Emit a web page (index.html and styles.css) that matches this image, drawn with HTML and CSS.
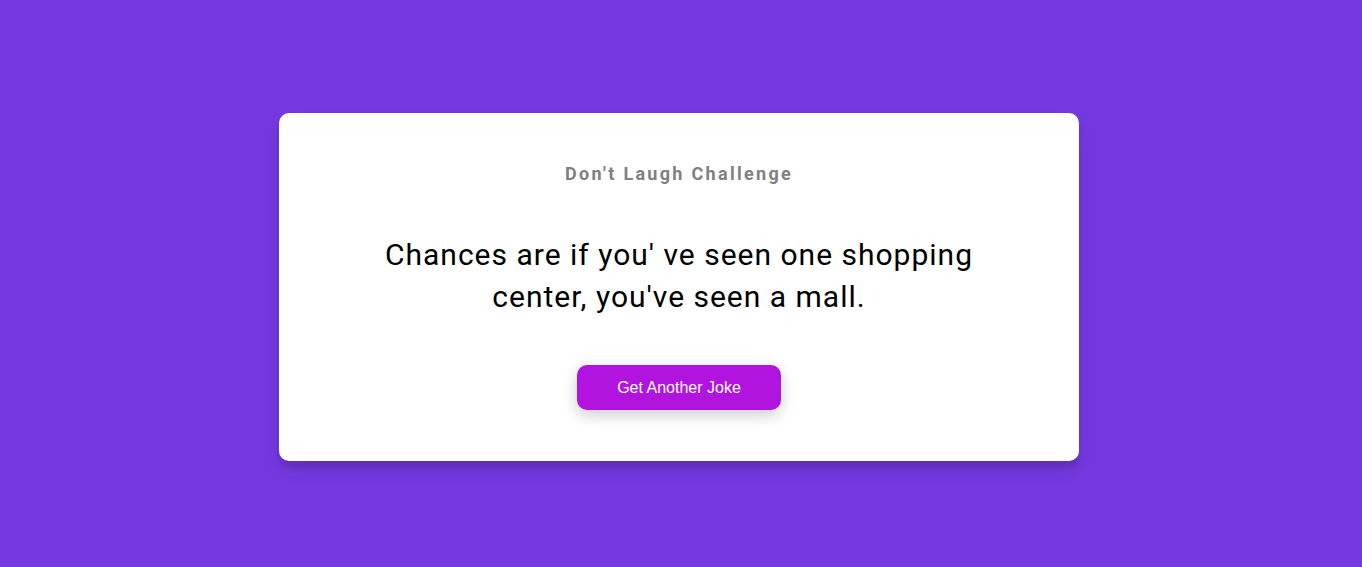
FILE: index.html
```html
<!DOCTYPE html>
<html lang="en">
<head>
<meta charset="UTF-8">
<title>Don't Laugh Challenge</title>
<link rel="stylesheet" href="styles.css">
</head>
<body>
<div class="container">
  <h3 class="title">Don't Laugh Challenge</h3>
  <div class="joke">Chances are if you' ve seen one shopping center, you've seen a mall.</div>
  <button class="btn">Get Another Joke</button>
</div>
</body>
</html>
```
FILE: styles.css
```css
* { box-sizing: border-box; }
html, body { height: 100%; }
body {
  margin: 0;
  padding: 7px 4px 0 0;
  background: #7539e0;
  font-family: Roboto, "Liberation Sans", sans-serif;
  display: flex;
  align-items: center;
  justify-content: center;
}
.container {
  width: 800px;
  height: 348px;
  background: #fff;
  border-radius: 10px;
  box-shadow: 0 10px 20px rgba(0,0,0,0.1), 0 6px 6px rgba(0,0,0,0.1);
  padding: 50px 20px;
  text-align: center;
  display: flex;
  flex-direction: column;
  align-items: center;
}
.title {
  margin: 0 0 50px;
  font-size: 18px;
  line-height: 21px;
  font-weight: 700;
  letter-spacing: 2.3px;
  color: #808080;
}
.joke {
  max-width: 600px;
  font-size: 30px;
  line-height: 42px;
  letter-spacing: 1px;
  color: #000;
  margin: 0 0 47px;
}
.btn {
  width: 204px;
  height: 45px;
  border: 0;
  border-radius: 10px;
  background: #b114de;
  color: #fff;
  font-family: "Liberation Sans", Arial, sans-serif;
  font-size: 16px;
  box-shadow: 0 5px 15px rgba(0,0,0,0.2);
  cursor: pointer;
}
```
